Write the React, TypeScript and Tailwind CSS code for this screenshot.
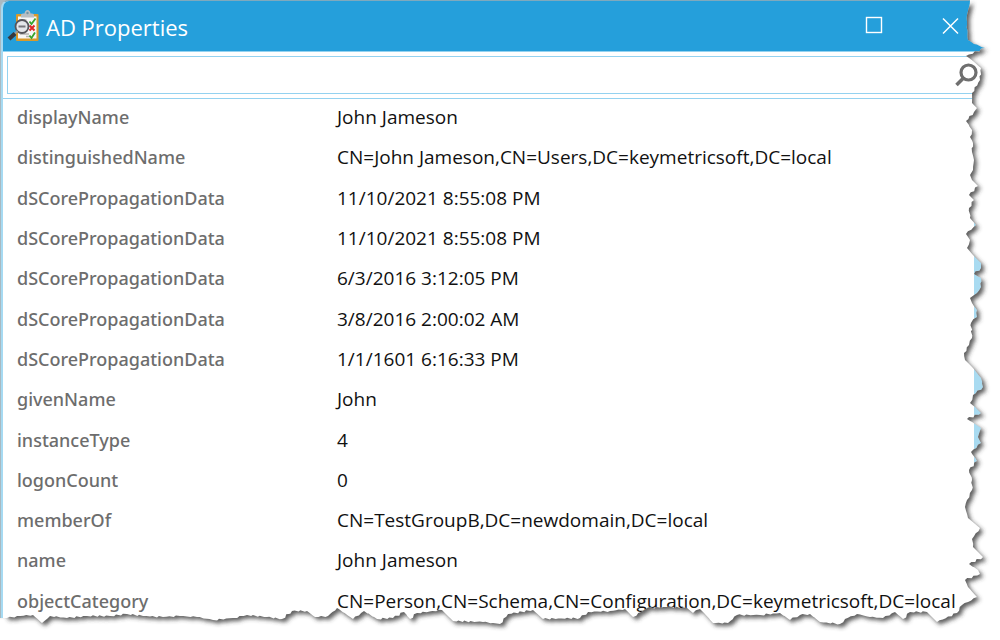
import { useState } from "react";

type Property = { name: string; value: string };

const properties: Property[] = [
  { name: "displayName", value: "John Jameson" },
  { name: "distinguishedName", value: "CN=John Jameson,CN=Users,DC=keymetricsoft,DC=local" },
  { name: "dSCorePropagationData", value: "11/10/2021 8:55:08 PM" },
  { name: "dSCorePropagationData", value: "11/10/2021 8:55:08 PM" },
  { name: "dSCorePropagationData", value: "6/3/2016 3:12:05 PM" },
  { name: "dSCorePropagationData", value: "3/8/2016 2:00:02 AM" },
  { name: "dSCorePropagationData", value: "1/1/1601 6:16:33 PM" },
  { name: "givenName", value: "John" },
  { name: "instanceType", value: "4" },
  { name: "logonCount", value: "0" },
  { name: "memberOf", value: "CN=TestGroupB,DC=newdomain,DC=local" },
  { name: "name", value: "John Jameson" },
  { name: "objectCategory", value: "CN=Person,CN=Schema,CN=Configuration,DC=keymetricsoft,DC=local" },
];

// Torn paper outline: down the right side, then back along the bottom.
const tear: [number, number][] = [
  [970, 0], [969, 7], [967, 15], [967, 25], [968, 40], [974, 44], [985, 48], [966, 56], [973, 61], [981, 68],
  [980, 80], [972, 93], [972, 103], [977, 108], [974, 112], [966, 121], [972, 130], [970, 137], [973, 143],
  [972, 152], [974, 160], [973, 170], [970, 175], [972, 180], [978, 186], [969, 195], [974, 200], [969, 208],
  [970, 218], [976, 225], [966, 234], [970, 240], [967, 248], [973, 255], [981, 263], [981, 268], [974, 274],
  [981, 278], [981, 287], [977, 293], [970, 298], [972, 303], [977, 310], [977, 317], [971, 323], [972, 338],
  [969, 345], [964, 353], [965, 360], [973, 368], [981, 378], [983, 387], [973, 395], [970, 403], [975, 407],
  [981, 413], [967, 419], [975, 424], [981, 428], [978, 437], [981, 443], [971, 452], [977, 461], [969, 470],
  [972, 480], [972, 490], [967, 500], [965, 507], [968, 518], [980, 528], [972, 539], [973, 547], [983, 557],
  [969, 564], [978, 570], [980, 574], [965, 580], [968, 587], [977, 597], [962, 605], [957, 613], [937, 622],
  [927, 612], [910, 612], [903, 619], [895, 612], [883, 618], [870, 617], [857, 614], [845, 619], [840, 624],
  [820, 622], [810, 614], [800, 615], [790, 620], [780, 613], [760, 615], [737, 615], [728, 623], [713, 623],
  [704, 613], [700, 609], [693, 613], [687, 608], [667, 607], [647, 608], [633, 617], [625, 609], [610, 611],
  [588, 612], [580, 618], [543, 619], [533, 610], [508, 614], [500, 624], [483, 622], [453, 621], [442, 610],
  [417, 613], [410, 619], [404, 612], [393, 618], [377, 619], [364, 611], [353, 619], [337, 608], [328, 616],
  [315, 617], [307, 611], [292, 611], [282, 619], [267, 617], [247, 615], [233, 618], [213, 620], [197, 617],
  [180, 616], [163, 617], [143, 616], [127, 614], [110, 616], [87, 616], [67, 618], [50, 616], [42, 623],
  [33, 615], [17, 616], [7, 618],
];

// Splits long segments into short ones with a little roughness.
function roughen(points: [number, number][]) {
  const out: string[] = [];
  points.forEach(([x, y], i) => {
    out.push(`${x} ${y}`);
    const next = points[i + 1];
    if (!next) return;
    const steps = Math.floor(Math.hypot(next[0] - x, next[1] - y) / 3);
    for (let s = 1; s < steps; s++) {
      const t = s / steps;
      const wobble = Math.sin(i * 12.9 + s * 78.2) * 0.8;
      out.push(`${(x + (next[0] - x) * t + wobble).toFixed(1)} ${(y + (next[1] - y) * t + wobble).toFixed(1)}`);
    }
  });
  return out.join("L");
}

const edge = roughen(tear);
const outside = `M${edge}L0 618L0 640L1000 640L1000 0Z`;
const paper = `M-20 3L967 3L${edge}L3 612L-20 612Z`;

function TornEdge() {
  return (
    <svg
      aria-hidden="true"
      className="pointer-events-none absolute inset-0 h-full w-full"
      viewBox="0 0 1000 640"
      preserveAspectRatio="none"
    >
      <defs>
        <clipPath id="outside">
          <path d={outside} />
        </clipPath>
        <filter id="soften" x="-5%" y="-5%" width="110%" height="110%">
          <feGaussianBlur stdDeviation="2" />
        </filter>
      </defs>
      <g clipPath="url(#outside)">
        <rect width="1000" height="640" fill="#fff" />
        <path d={paper} transform="translate(3 3)" fill="#3a3a3a" fillOpacity="0.8" filter="url(#soften)" />
      </g>
    </svg>
  );
}

function AppIcon() {
  return (
    <svg aria-hidden="true" className="h-8 w-8 shrink-0" viewBox="0 0 32 32" fill="none">
      <rect x="9" y="4" width="22.5" height="27" rx="1" fill="#d99a2b" />
      <rect x="11" y="6.500" width="18.500" height="22" fill="#f7f7f7" />
      <path d="M14 7.500V5q0-1.500 2-1.500h1.500Q18 0 20.500 0T23.500 3.500H25q2 0 2 1.500v2.500Z" fill="#b9bec2" />
      <circle cx="20.500" cy="3" r="1.200" fill="#6f93a6" />
      <path d="M12.500 10h7M13 24h9M19 26.500h4" stroke="#b5b5b5" strokeWidth="1.500" />
      <path d="M22.500 11.500l2 2.500 4-5.500M22.500 25.500l2 2.500 3.500-5.500" stroke="#36a52d" strokeWidth="1.800" />
      <path d="M22.500 15.500l5 5M27.500 15.500l-5 5" stroke="#e02525" strokeWidth="2" />
      <circle cx="15" cy="16.500" r="6.500" fill="#e3e6ea" stroke="#56565c" strokeWidth="1.800" />
      <path d="M11.500 16.500h7" stroke="#77777c" strokeWidth="1.800" />
      <path d="M10.500 21l-3 3" stroke="#9a9a9a" strokeWidth="2" />
      <path d="M8 23.500l-6 5.500" stroke="#38383d" strokeWidth="4.200" />
    </svg>
  );
}

export default function App() {
  const [query, setQuery] = useState("");
  const shown = properties.filter((p) => (p.name + p.value).toLowerCase().includes(query.toLowerCase()));

  return (
    <div className="relative min-h-screen overflow-hidden bg-white font-['Open_Sans','Noto_Sans',sans-serif]">
      <div className="mr-[14px] bg-[#a9b9c1] pl-px">
        <main className="overflow-hidden rounded-tl-lg border-t border-l-2 border-t-[#7fa9bd] border-l-[#a6daf2] bg-white">
          <header className="-ml-0.5 flex h-[50px] items-center bg-[#259fdb] pl-1.5 text-white">
            <AppIcon />
            <h1 className="ml-[7px] flex-1 pt-0.5 text-[22px] leading-8 font-normal">AD Properties</h1>
            <button type="button" aria-label="Maximize" className="mr-14 flex h-8 w-5 items-center justify-center">
              <svg className="h-5 w-5" viewBox="0 0 20 20" fill="none">
                <rect x="2.500" y="1.500" width="15" height="15" stroke="#fff" strokeWidth="1.400" />
              </svg>
            </button>
            <button type="button" aria-label="Close" className="mr-[26px] flex h-8 w-5 items-center justify-center">
              <svg className="h-5 w-5" viewBox="0 0 20 20" fill="none">
                <path d="M3 2.500l15 15M18 2.500l-15 15" stroke="#fff" strokeWidth="1.500" />
              </svg>
            </button>
          </header>
          <form
            role="search"
            onSubmit={(e) => e.preventDefault()}
            className="relative border-t border-b border-[#94d2f0] py-1 pl-1"
          >
            <input
              type="text"
              aria-label="Search properties"
              value={query}
              onChange={(e) => setQuery(e.target.value)}
              className="block h-[38px] w-full border border-[#94d2f0] bg-white pr-10 pl-2 text-lg outline-none"
            />
            <button type="submit" aria-label="Search" className="absolute top-2.5 right-[5px] h-7 w-7">
              <svg className="h-7 w-7" viewBox="0 0 28 28" fill="none" stroke="#6f6f6f">
                <circle cx="15.500" cy="10.500" r="7.500" strokeWidth="3.200" />
                <path d="M10.500 16L3.500 23" strokeWidth="3.600" />
              </svg>
            </button>
          </form>
          <div className="flex">
            <table className="h-[524px] flex-1 text-left leading-6">
              <tbody>
                {shown.map((p, i) => (
                  <tr key={i}>
                    <th
                      scope="row"
                      className="w-[334px] pb-1 pl-3.5 font-['Noto_Sans',sans-serif] text-[18px] font-medium text-[#6d6d6d]"
                    >
                      {p.name}
                    </th>
                    <td className="pb-1 text-[19px] whitespace-nowrap text-[#111]">{p.value}</td>
                  </tr>
                ))}
              </tbody>
            </table>
            <div aria-hidden="true" className="w-3 pt-[123px]">
              <div className="h-[244px] bg-[#a9dbf1]" />
            </div>
          </div>
        </main>
      </div>
      <TornEdge />
    </div>
  );
}
